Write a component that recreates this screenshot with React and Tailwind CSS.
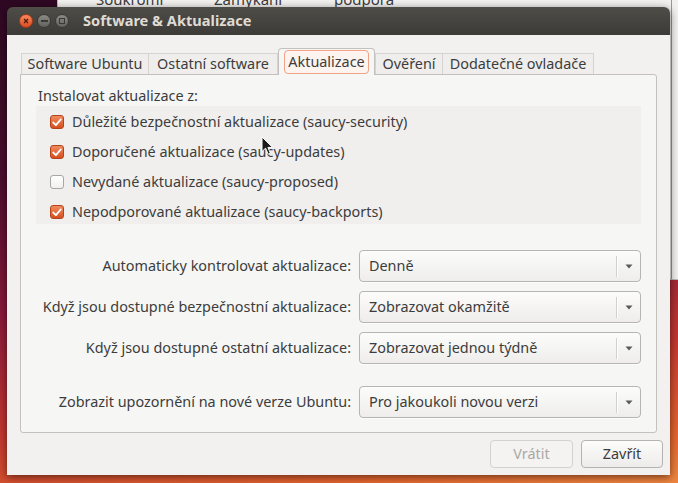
import React from 'react';

const font = { fontFamily: '"Noto Sans", "DejaVu Sans", sans-serif' };

const tabs = [
  { label: 'Software Ubuntu', w: 'w-[128px]' },
  { label: 'Ostatní software', w: 'w-[129px]' },
  { label: 'Aktualizace', w: 'w-[97px]', active: true },
  { label: 'Ověření', w: 'w-[68px]' },
  { label: 'Dodatečné ovladače', w: 'w-[151px]' },
];

const sources = [
  { label: 'Důležité bezpečnostní aktualizace (saucy-security)', on: true },
  { label: 'Doporučené aktualizace (saucy-updates)', on: true },
  { label: 'Nevydané aktualizace (saucy-proposed)', on: false },
  { label: 'Nepodporované aktualizace (saucy-backports)', on: true },
];

const combos = [
  { label: 'Automaticky kontrolovat aktualizace:', value: 'Denně', mt: 'mt-0' },
  { label: 'Když jsou dostupné bezpečnostní aktualizace:', value: 'Zobrazovat okamžitě', mt: 'mt-[9px]' },
  { label: 'Když jsou dostupné ostatní aktualizace:', value: 'Zobrazovat jednou týdně', mt: 'mt-[9px]' },
  { label: 'Zobrazit upozornění na nové verze Ubuntu:', value: 'Pro jakoukoli novou verzi', mt: 'mt-[22px]' },
];

function Check({ on }) {
  if (!on) {
    return (
      <span className="w-[14px] h-[14px] rounded-[3px] border border-[#a9a7a3] bg-gradient-to-b from-[#ffffff] to-[#f1f0ef] shrink-0" />
    );
  }
  return (
    <span className="w-[14px] h-[14px] rounded-[3px] border border-[#b4451b] bg-gradient-to-b from-[#f08a5d] to-[#d64f1c] shrink-0 grid place-items-center">
      <svg width="10" height="9" viewBox="0 0 10 9">
        <path d="M1.3 4.6 L3.9 7.2 L8.7 1.5" fill="none" stroke="#ffffff" strokeWidth="1.9" strokeLinecap="round" strokeLinejoin="round" />
      </svg>
    </span>
  );
}

function Combo({ value }) {
  return (
    <div className="w-[282px] h-[32px] rounded-[4px] border border-[#b7b5b1] bg-gradient-to-b from-[#fcfcfb] to-[#eeedeb] shadow-[0_1px_0_rgba(255,255,255,0.8)] flex items-center">
      <span className="flex-1 pl-[9px] text-[14.4px] text-[#3c3c3c]">{value}</span>
      <span className="w-px h-[21px] bg-[#d2d0cc] shadow-[1px_0_0_#ffffff]" />
      <span className="w-[23px] flex justify-center">
        <svg width="8" height="5" viewBox="0 0 8 5">
          <path d="M0.5 0.5 L7.5 0.5 L4 4.5 Z" fill="#5b5a57" />
        </svg>
      </span>
    </div>
  );
}

function WinButton({ kind }) {
  if (kind === 'close') {
    return (
      <span className="w-[14px] h-[14px] rounded-full bg-gradient-to-b from-[#f68a5c] to-[#dd4a1c] border border-[#a8391a] grid place-items-center">
        <svg width="6" height="6" viewBox="0 0 6 6">
          <path d="M1 1 L5 5 M5 1 L1 5" stroke="#4a1a0c" strokeWidth="1.2" />
        </svg>
      </span>
    );
  }
  return (
    <span className="w-[14px] h-[14px] rounded-full bg-gradient-to-b from-[#8b8a84] to-[#63625d] border border-[#3a3935] grid place-items-center">
      {kind === 'min' ? (
        <span className="w-[7px] h-[1.5px] bg-[#3a3935]" />
      ) : (
        <span className="w-[6px] h-[6px] border border-[#3a3935]" />
      )}
    </span>
  );
}

export default function App() {
  return (
    <div
      className="relative w-[678px] h-[483px] overflow-hidden bg-[linear-gradient(172deg,#2e0822_0%,#4a0d2e_30%,#8a1a3a_55%,#c2372f_75%,#e5662f_92%,#ee8640_100%)]"
      style={font}
    >
      {/* window behind */}
      <div className="absolute left-[57px] top-[-40px] w-[700px] h-[320px] bg-[#f2f1f0] border-l border-b border-[#bdbbb7]">
        <span className="absolute left-[38px] top-[32px] text-[15px] leading-[15px] text-[#3c3c3c]">Soukromí</span>
        <span className="absolute left-[156px] top-[32px] text-[15px] leading-[15px] text-[#3c3c3c]">Zamykání</span>
        <span className="absolute left-[276px] top-[32px] text-[15px] leading-[15px] text-[#3c3c3c]">podpora</span>
        <span className="absolute left-[613px] top-0 w-px h-full bg-[#9a9894]" />
      </div>

      {/* dialog */}
      <div className="absolute left-[7px] top-[7px] w-[663px] h-[468px] rounded-t-[6px] shadow-[0_2px_9px_rgba(0,0,0,0.55)] flex flex-col overflow-hidden">
        <div className="h-[28px] bg-gradient-to-b from-[#4f4d48] to-[#3c3b37] flex items-center pl-[12px] shrink-0">
          <div className="flex gap-[4px]">
            <WinButton kind="close" />
            <WinButton kind="min" />
            <WinButton kind="max" />
          </div>
          <span className="ml-[14px] text-[14.6px] font-bold text-[#dfdbd2]">Software &amp; Aktualizace</span>
        </div>

        <div className="flex-1 bg-[#f2f1f0] flex flex-col px-[13px] pt-[13px] pb-[7px]">
          <div className="flex items-end pl-px h-[26px] relative z-10">
            {tabs.map((t, i) =>
              t.active ? (
                <div
                  key={t.label}
                  className={`${t.w} h-[27px] -mb-px rounded-t-[4px] border border-b-0 border-[#c3c1bd] bg-[#f6f6f5] flex items-start justify-center pt-px`}
                >
                  <span className="h-[24px] px-[3px] rounded-[4px] border border-[#f1a287] bg-[#fdf3ef] text-[14.4px] text-[#3c3c3c] flex items-center">
                    {t.label}
                  </span>
                </div>
              ) : (
                <div
                  key={t.label}
                  className={`${t.w} h-[21px] bg-[#efeeec] border-t border-[#d6d4d1] ${i === 0 || i === 3 ? 'border-l' : ''} border-r flex items-center justify-center text-[14.4px] text-[#3c3c3c]`}
                >
                  {t.label}
                </div>
              )
            )}
          </div>

          <div className="flex-1 border border-[#c3c1bd] rounded-b-[3px] rounded-tr-[3px] bg-[#f6f6f5] pt-[11px] px-[15px] flex flex-col">
            <div className="pl-[2px] h-[20px] flex items-center text-[14.4px] text-[#3c3c3c]">
              Instalovat aktualizace z:
            </div>
            <div className="h-[118px] bg-[#f0efee] pt-[1px] pl-[14px]">
              {sources.map((s) => (
                <div key={s.label} className="h-[30px] flex items-center gap-[8px] text-[14.4px] text-[#3c3c3c]">
                  <Check on={s.on} />
                  <span>{s.label}</span>
                </div>
              ))}
            </div>

            <div className="mt-[26px] flex flex-col">
              {combos.map((c) => (
                <div key={c.label} className={`${c.mt} flex items-center justify-end gap-[8px]`}>
                  <span className="text-[14.4px] text-[#3c3c3c]">{c.label}</span>
                  <Combo value={c.value} />
                </div>
              ))}
            </div>
          </div>

          <div className="mt-[7px] -mr-[6px] flex justify-end gap-[8px]">
            <button className="w-[83px] h-[28px] rounded-[4px] border border-[#d4d2cf] bg-[#f4f3f2] text-[14.4px] text-[#aaa8a4]">
              Vrátit
            </button>
            <button className="w-[82px] h-[28px] rounded-[4px] border border-[#b5b3af] bg-gradient-to-b from-[#fcfcfb] to-[#edecea] text-[14.4px] text-[#3c3c3c]">
              Zavřít
            </button>
          </div>
        </div>
      </div>

      {/* mouse pointer */}
      <svg className="absolute left-[261px] top-[136px]" width="13" height="20" viewBox="0 0 13 20">
        <path d="M1 1 L1 15.5 L4.6 12.2 L7.2 18.2 L9.4 17.2 L6.9 11.4 L11.6 11.4 Z" fill="#1a1a1a" stroke="#ffffff" strokeWidth="1" strokeLinejoin="round" />
      </svg>
    </div>
  );
}
